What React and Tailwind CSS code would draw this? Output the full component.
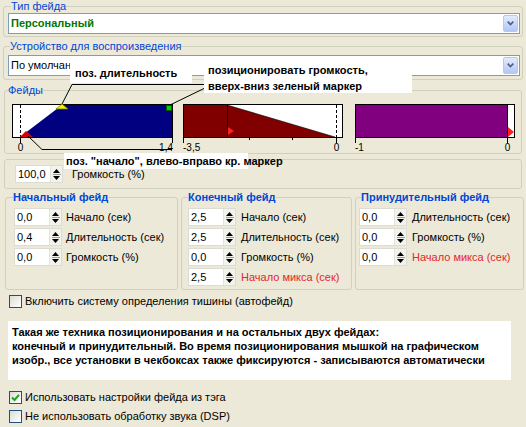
import React from "react";

function Spin({ v }) {
  return (
    <div className="flex h-[18px] w-[48px] shrink-0 border border-[#DCDCD2] bg-white">
      <div className="flex-1 pl-[2px] leading-[16px]">{v}</div>
      <div className="flex w-[12px] flex-col items-center justify-center gap-[1px] border-l border-[#E4E4DC] bg-[#F3F3EE]">
        <svg width="7" height="4" viewBox="0 0 7 4"><path d="M3.5 0 L7 4 L0 4Z" fill="#000" /></svg>
        <div className="h-px w-[8px] bg-[#9A9A9A]" />
        <svg width="7" height="4" viewBox="0 0 7 4"><path d="M0 0 L7 0 L3.5 4Z" fill="#000" /></svg>
      </div>
    </div>
  );
}

function Row({ v, label, red, gap = "gap-[4px]" }) {
  return (
    <div className={`flex items-center ${gap}`}>
      <Spin v={v} />
      <span className={red ? "text-[#E4262C]" : ""}>{label}</span>
    </div>
  );
}

function Combo({ children }) {
  return (
    <div className="flex h-[21px] items-center border border-[#7F9DB9] bg-white pl-[2px] pr-[1px]">
      <div className="flex-1">{children}</div>
      <div className="flex h-[17px] w-[15px] items-center justify-center rounded-[2px] border border-[#B5C8F5] bg-gradient-to-b from-[#E3EBFD] to-[#B3C7F5]">
        <svg width="7" height="5" viewBox="0 0 7 5">
          <path d="M0.7 0.7 L3.5 3.6 L6.3 0.7" stroke="#4D6185" strokeWidth="1.7" fill="none" />
        </svg>
      </div>
    </div>
  );
}

function Check({ checked, children }) {
  return (
    <div className="flex items-center gap-[3px] pl-[9px]">
      <div className="flex h-[13px] w-[13px] items-center justify-center border border-[#1C5180] bg-gradient-to-br from-[#DCDCD7] to-white">
        {checked && (
          <svg width="9" height="9" viewBox="0 0 9 9">
            <path d="M1 4.5 L3.5 7 L8 1.8" stroke="#21A121" strokeWidth="2" fill="none" />
          </svg>
        )}
      </div>
      <span>{children}</span>
    </div>
  );
}

const lab = { fontFamily: "Liberation Sans, Arial, sans-serif", fontSize: 10 };

function Graph1() {
  return (
    <svg width="161" height="49" className="shrink-0 overflow-visible">
      <rect x="0.5" y="0.5" width="160" height="33" fill="#fff" stroke="#000" />
      <line x1="8.5" y1="1" x2="8.5" y2="33" stroke="#000" strokeDasharray="3 2" />
      <polygon points="8,33 50,1 160,1 160,33" fill="#000080" />
      <rect x="0.5" y="0.5" width="160" height="33" fill="none" stroke="#000" />
      <polygon points="50,0 56,5 44,5" fill="#F4F400" stroke="#7A7A00" strokeWidth="0.8" />
      <rect x="154.5" y="1.5" width="5" height="5" fill="#00D000" stroke="#006000" />
      <polygon points="14,27 21,33 8,33" fill="#D80000" />
      <line x1="8.5" y1="33" x2="8.5" y2="39" stroke="#000" />
      <line x1="160.5" y1="33" x2="160.5" y2="39" stroke="#000" />
      <text x="8.5" y="47" textAnchor="middle" style={lab}>0</text>
      <text x="161" y="47" textAnchor="end" style={lab}>1,4</text>
    </svg>
  );
}

function Graph2() {
  return (
    <svg width="160" height="49" className="shrink-0 overflow-visible">
      <rect x="0.5" y="0.5" width="159" height="33" fill="#fff" stroke="#000" />
      <rect x="1" y="1" width="44" height="32" fill="#800000" />
      <polygon points="44,1 152,33 44,33" fill="#800000" />
      <line x1="153.5" y1="1" x2="153.5" y2="33" stroke="#000" strokeDasharray="3 2" />
      <line x1="44.5" y1="1" x2="44.5" y2="33" stroke="#000" />
      <line x1="44" y1="1" x2="152" y2="33" stroke="#000" strokeWidth="0.6" />
      <rect x="0.5" y="0.5" width="159" height="33" fill="none" stroke="#000" />
      <polygon points="45,23 51,27 45,31" fill="#FF2020" />
      <line x1="0.5" y1="33" x2="0.5" y2="39" stroke="#000" />
      <line x1="66.5" y1="33" x2="66.5" y2="36" stroke="#000" />
      <line x1="109.5" y1="33" x2="109.5" y2="36" stroke="#000" />
      <line x1="153.5" y1="33" x2="153.5" y2="39" stroke="#000" />
      <text x="0" y="47" style={lab}>-3,5</text>
      <text x="153.5" y="47" textAnchor="middle" style={lab}>0</text>
    </svg>
  );
}

function Graph3() {
  return (
    <svg width="160" height="49" className="shrink-0 overflow-visible">
      <rect x="0.5" y="0.5" width="159" height="33" fill="#fff" stroke="#000" />
      <rect x="1" y="1" width="151" height="32" fill="#800080" />
      <line x1="152.5" y1="1" x2="152.5" y2="33" stroke="#000" />
      <rect x="0.5" y="0.5" width="159" height="33" fill="none" stroke="#000" />
      <polygon points="153,23 159,28 153,33" fill="#FF2020" />
      <line x1="0.5" y1="33" x2="0.5" y2="39" stroke="#000" />
      <line x1="152.5" y1="33" x2="152.5" y2="39" stroke="#000" />
      <text x="0" y="47" style={lab}>-1</text>
      <text x="152.5" y="47" textAnchor="middle" style={lab}>0</text>
    </svg>
  );
}

export default function App() {
  return (
    <div className="relative h-[427px] w-[526px] overflow-hidden bg-[#ECE9D8] font-['Liberation_Sans',Arial,sans-serif] text-[11px] leading-[13px] text-black">
      {/* Тип фейда */}
      <fieldset className="mx-[3px] rounded-[3px] border border-[#D0D0BF] pl-[4px] pr-[2px] pb-[2px]">
        <legend className="ml-[3px] leading-[12px] text-[#0046D5]">Тип фейда</legend>
        <div className="mt-[1px]">
          <Combo>
            <span className="font-bold text-[#007800]">Персональный</span>
          </Combo>
        </div>
      </fieldset>

      {/* Устройство */}
      <fieldset className="mx-[3px] mt-[3px] rounded-[3px] border border-[#D0D0BF] pl-[4px] pr-[2px] pb-[3px]">
        <legend className="ml-[2px] leading-[12px] text-[#0046D5]">Устройство для воспроизведения</legend>
        <div className="mt-[3px]">
          <Combo>
            <span>По умолчанию</span>
          </Combo>
        </div>
      </fieldset>

      {/* Фейды */}
      <fieldset className="ml-[4px] mr-[4px] mt-[4px] rounded-[3px] border border-[#D0D0BF]">
        <legend className="ml-[3px] leading-[12px] text-[#0046D5]">Фейды</legend>
        <div className="mt-[8px] flex pl-[7px]">
          <Graph1 />
          <div className="ml-[10px]"><Graph2 /></div>
          <div className="ml-[12px]"><Graph3 /></div>
        </div>
      </fieldset>

      {/* Громкость */}
      <div className="ml-[4px] mr-[4px] mt-[5px] rounded-[3px] border border-[#D0D0BF] pl-[10px] pt-[5px] pb-[5px]">
        <div className="flex items-center gap-[9px]">
          <Spin v="100,0" />
          <span>Громкость (%)</span>
        </div>
      </div>

      {/* три фейда */}
      <div className="mt-[2px] flex gap-[3px] pl-[5px]">
        <fieldset className="h-[99px] w-[173px] rounded-[3px] border border-[#D0D0BF] pl-[8px]">
          <legend className="ml-[-1px] font-bold leading-[12px] text-[#0046D5]">Начальный фейд</legend>
          <div className="mt-[5px] flex flex-col gap-[2px]">
            <Row v="0,0" label="Начало (сек)" />
            <Row v="0,4" label="Длительность (сек)" />
            <Row v="0,0" label="Громкость (%)" />
          </div>
        </fieldset>
        <fieldset className="h-[99px] w-[171px] rounded-[3px] border border-[#D0D0BF] pl-[6px]">
          <legend className="ml-0 font-bold leading-[12px] text-[#0046D5]">Конечный фейд</legend>
          <div className="mt-[5px] flex flex-col gap-[2px]">
            <Row v="2,5" label="Начало (сек)" gap="gap-[5px]" />
            <Row v="2,5" label="Длительность (сек)" gap="gap-[5px]" />
            <Row v="0,0" label="Громкость (%)" gap="gap-[5px]" />
            <Row v="2,5" label="Начало микса (сек)" red gap="gap-[5px]" />
          </div>
        </fieldset>
        <fieldset className="h-[99px] w-[169px] rounded-[3px] border border-[#D0D0BF] pl-[3px]">
          <legend className="ml-[2px] font-bold leading-[12px] text-[#0046D5]">Принудительный фейд</legend>
          <div className="mt-[5px] flex flex-col gap-[2px]">
            <Row v="0,0" label="Длительность (сек)" gap="gap-[5px]" />
            <Row v="0,0" label="Громкость (%)" gap="gap-[5px]" />
            <Row v="0,0" label="Начало микса (сек)" red gap="gap-[5px]" />
          </div>
        </fieldset>
      </div>

      <div className="mt-[5px]">
        <Check>Включить систему определения тишины (автофейд)</Check>
      </div>

      <div className="ml-[8px] mt-[13px] h-[59px] w-[503px] whitespace-nowrap bg-white pl-[4px] pt-[4px] text-[11px] font-bold leading-[14px]">
        <div>Такая же техника позиционирования и на остальных двух фейдах:</div>
        <div>конечный и принудительный. Во время позиционирования мышкой на графическом</div>
        <div>изобр., все установки в чекбоксах также фиксируются - записываются автоматически</div>
      </div>

      <div className="mt-[11px]">
        <Check checked>Использовать настройки фейда из тэга</Check>
      </div>
      <div className="mt-[6px]">
        <Check>Не использовать обработку звука (DSP)</Check>
      </div>

      {/* callouts overlay */}
      <svg className="pointer-events-none absolute left-0 top-0" width="526" height="427">
        <polyline points="62,104 72,84.5 204,84.5" fill="none" stroke="#000" strokeWidth="1" />
        <line x1="170" y1="105" x2="205" y2="88" stroke="#000" strokeWidth="1" />
        <polyline points="28,136 42,149.5 172,149.5" fill="none" stroke="#000" strokeWidth="1" />
      </svg>
      <div className="absolute left-[70px] top-[63px] h-[20px] w-[122px] whitespace-nowrap bg-white pl-[5px] pt-[3px] text-[11px] font-bold leading-[14px]">
        поз. длительность
      </div>
      <div className="absolute left-[204px] top-[60px] h-[33px] w-[208px] whitespace-nowrap bg-white pl-[4px] pt-[2px] text-[11px] font-bold leading-[16px]">
        <div>позиционировать громкость,</div>
        <div>вверх-вниз зеленый маркер</div>
      </div>
      <div className="absolute left-[64px] top-[153px] h-[16px] w-[184px] whitespace-nowrap bg-white pl-[2px] pt-[1px] text-[11px] font-bold leading-[14px]">
        поз. "начало", влево-вправо кр. маркер
      </div>
    </div>
  );
}
